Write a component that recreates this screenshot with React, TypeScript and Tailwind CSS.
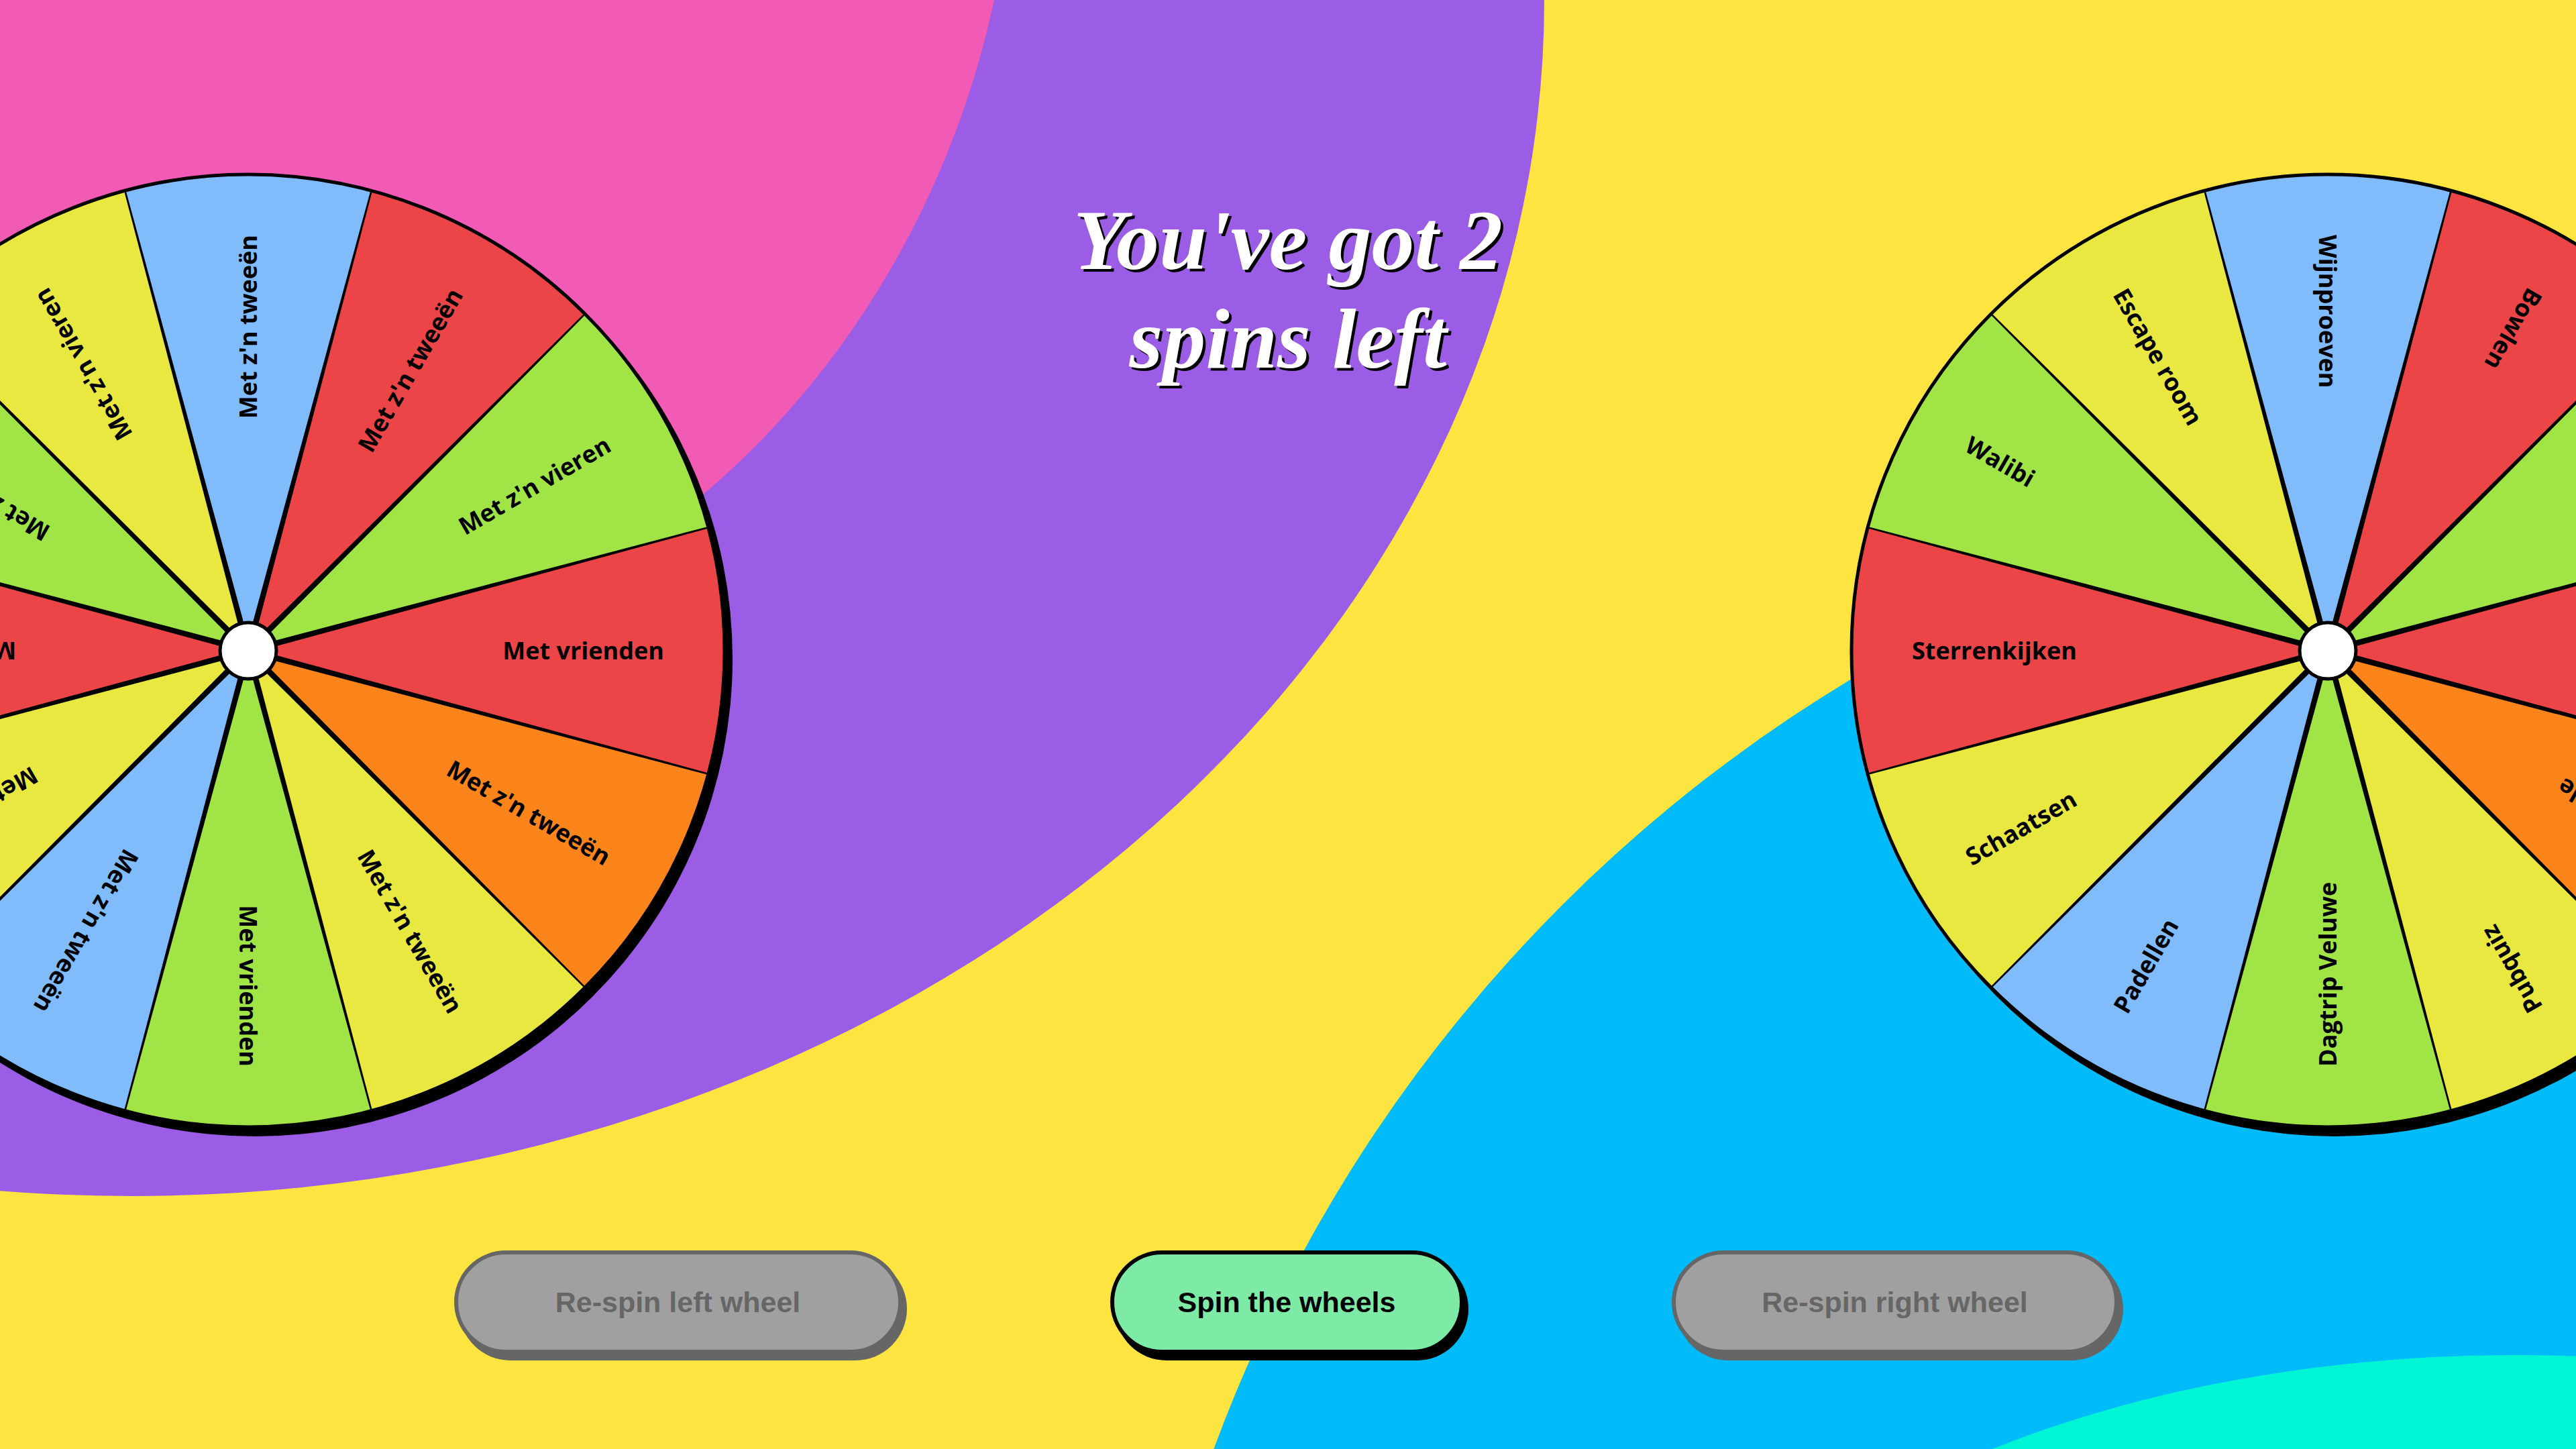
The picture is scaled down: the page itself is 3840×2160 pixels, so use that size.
import React from "react";

const COLORS = [
  "#ec4547",
  "#fc851b",
  "#e8e841",
  "#a0e545",
  "#80bbfc",
  "#e8e841",
  "#ec4547",
  "#a0e545",
  "#e8e841",
  "#80bbfc",
  "#ec4547",
  "#a0e545",
];

const LEFT_LABELS = [
  "Met vrienden",
  "Met z'n tweeën",
  "Met z'n tweeën",
  "Met vrienden",
  "Met z'n tweeën",
  "Met z'n vieren",
  "Met z'n tweeën",
  "Met z'n tweeën",
  "Met z'n vieren",
  "Met z'n tweeën",
  "Met z'n tweeën",
  "Met z'n vieren",
];

const RIGHT_LABELS = [
  "Koken",
  "Jeu de boule",
  "Pubquiz",
  "Dagtrip Veluwe",
  "Padellen",
  "Schaatsen",
  "Sterrenkijken",
  "Walibi",
  "Escape room",
  "Wijnproeven",
  "Bowlen",
  "Karten",
];

const R = 710;
const rad = (d: number) => (d * Math.PI) / 180;

// flipped: labels read from the rim towards the hub (right wheel)
function Wheel({ labels, flipped = false }: { labels: string[]; flipped?: boolean }) {
  const n = labels.length;
  const step = 360 / n;

  return (
    <div className="w-[1430px] h-[1430px] shrink-0">
      <svg width="1430" height="1430" viewBox="-715 -715 1430 1430" overflow="visible">
        <circle cx="10" cy="12" r="712" fill="#000" />
        {labels.map((_, i) => {
          const a1 = rad(i * step - step / 2);
          const a2 = rad(i * step + step / 2);
          const d = `M0 0 L${R * Math.cos(a1)} ${R * Math.sin(a1)} A${R} ${R} 0 0 1 ${R * Math.cos(a2)} ${R * Math.sin(a2)} Z`;
          return <path key={i} d={d} fill={COLORS[i % COLORS.length]} />;
        })}
        {labels.map((_, i) => {
          const a = rad(i * step + step / 2);
          const cx = Math.cos(a);
          const sy = Math.sin(a);
          const px = -sy;
          const py = cx;
          const pts = [
            [px * 4.5, py * 4.5],
            [R * cx + px * 1.3, R * sy + py * 1.3],
            [R * cx - px * 1.3, R * sy - py * 1.3],
            [-px * 4.5, -py * 4.5],
          ]
            .map((p) => p.join(","))
            .join(" ");
          return <polygon key={i} points={pts} fill="#000" />;
        })}
        <circle cx="0" cy="0" r={R} fill="none" stroke="#000" strokeWidth="5" />
        {labels.map((label, i) => (
          <text
            key={i}
            transform={`rotate(${i * step + (flipped ? 180 : 0)})`}
            x={flipped ? -620 : 620}
            y="13"
            textAnchor={flipped ? "start" : "end"}
            fontFamily="'Open Sans', sans-serif"
            fontWeight="700"
            fontSize="36"
            fill="#000"
          >
            {label}
          </text>
        ))}
        <circle cx="0" cy="0" r="42" fill="#fff" stroke="#000" strokeWidth="5" />
      </svg>
    </div>
  );
}

function Background() {
  return (
    <svg className="absolute inset-0" width="3840" height="2160" viewBox="0 0 3840 2160">
      <rect width="3840" height="2160" fill="#fee440" />
      <ellipse cx="196" cy="0" rx="2106" ry="1783" fill="#9b5de5" />
      <ellipse cx="300" cy="-300" rx="1214" ry="1317" fill="#f15bb5" />
      <circle cx="3918" cy="2939" r="2248" fill="#00bbf9" />
      <ellipse cx="3750" cy="2720" rx="1300" ry="700" fill="#00f5d4" />
    </svg>
  );
}

export default function App() {
  return (
    <div className="relative w-full h-[2160px] overflow-hidden bg-[#fee440]">
      <Background />
      <div className="relative flex flex-col items-center">
        <div className="flex justify-between items-start w-[4530px] h-[1430px] mt-[255px] shrink-0">
          <Wheel labels={LEFT_LABELS} />
          <h1 className="mt-[30px] w-[800px] text-center text-white font-bold italic text-[128px] leading-[147px] font-['Liberation_Serif',serif] [text-shadow:4px_4px_0_#000]">
            You've got 2 spins left
          </h1>
          <Wheel labels={RIGHT_LABELS} flipped />
        </div>

        <div className="flex items-center gap-[310px] mt-[179px] mr-[6px] font-['Liberation_Sans',Arial,sans-serif] font-bold text-[43px]">
          <button className="w-[668px] h-[154px] rounded-full border-[6px] border-[#666] bg-[#a0a0a0] text-[#666] shadow-[7px_10px_0_#666]">
            Re-spin left wheel
          </button>
          <button className="w-[527px] h-[154px] rounded-full border-[6px] border-black bg-[#7deaa6] text-black shadow-[7px_10px_0_#000]">
            Spin the wheels
          </button>
          <button className="w-[666px] h-[154px] rounded-full border-[6px] border-[#666] bg-[#a0a0a0] text-[#666] shadow-[7px_10px_0_#666]">
            Re-spin right wheel
          </button>
        </div>
      </div>
    </div>
  );
}
